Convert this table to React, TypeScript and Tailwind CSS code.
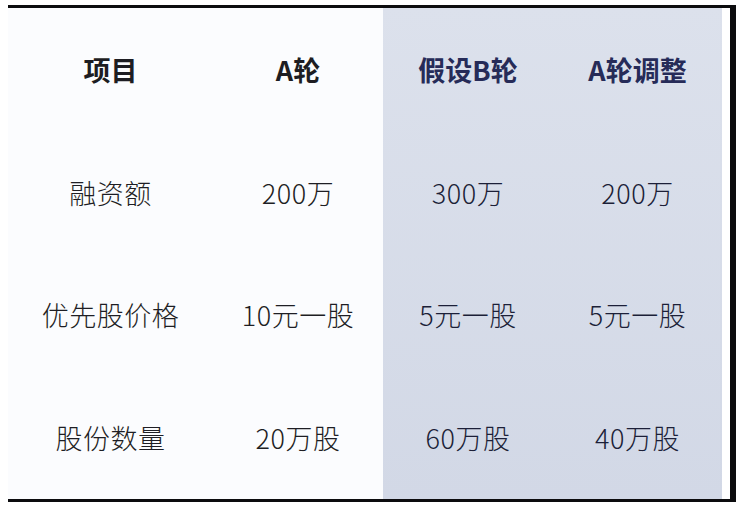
import React from 'react';

const font = { fontFamily: '"Noto Sans CJK SC", "Noto Sans", sans-serif' };

const labels = ['项目', '融资额', '优先股价格', '股份数量'];
const roundA = ['A轮', '200万', '10元一股', '20万股'];
const roundB = ['假设B轮', '300万', '5元一股', '60万股'];
const adjusted = ['A轮调整', '200万', '5元一股', '40万股'];

const Column: React.FC<{ cells: string[]; width: string; shaded?: boolean }> = ({ cells, width, shaded }) => (
  <div className={`flex flex-col h-full ${width}`}>
    {cells.map((c, i) => (
      <div
        key={i}
        className={`flex-1 flex items-center justify-center text-[27px] leading-none ${
          i === 0
            ? shaded
              ? 'font-bold text-[#262b58]'
              : 'font-bold text-[#1d1d22]'
            : shaded
              ? 'font-light tracking-[0.5px] text-[#1c1f38]'
              : 'font-light tracking-[0.5px] text-[#1e1e24]'
        }`}
      >
        {c}
      </div>
    ))}
  </div>
);

export default function App() {
  return (
    <div className="w-[736px] h-[506px] bg-white overflow-hidden" style={font}>
      <div className="ml-[8px] mt-[5px] w-[728px] h-[497px] border-t-[3px] border-b-[3px] border-r-[6px] border-[#0c0c0e] flex bg-[#fbfcfe]">
        <Column cells={labels} width="w-[205px]" />
        <Column cells={roundA} width="w-[170px]" />
        <div className="flex w-[339px] h-full bg-gradient-to-b from-[#dce1ec] to-[#d2d8e6]">
          <Column cells={roundB} width="w-[170px]" shaded />
          <Column cells={adjusted} width="w-[169px]" shaded />
        </div>
        <div className="w-[8px] h-full bg-white" />
      </div>
    </div>
  );
}
